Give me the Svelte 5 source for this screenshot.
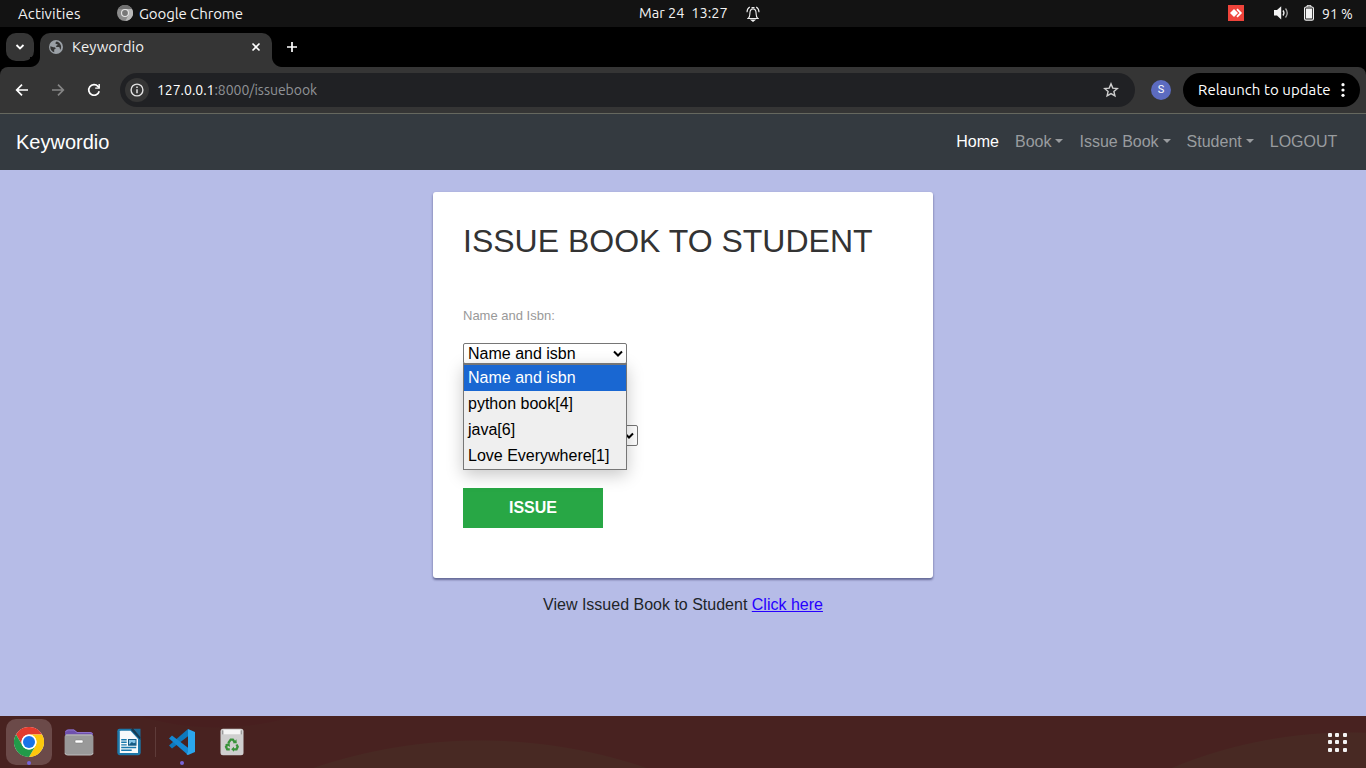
<script>
  const navItems = [
    { label: 'Home', active: true },
    { label: 'Book', menu: true },
    { label: 'Issue Book', menu: true },
    { label: 'Student', menu: true },
    { label: 'LOGOUT' }
  ];
  const options = ['Name and isbn', 'python book[4]', 'java[6]', 'Love Everywhere[1]'];
  const dots = [0, 1, 2, 3, 4, 5, 6, 7, 8];
</script>

<div class="screen">
  <header class="system">
    <div class="sys-left">
      <span class="activities">Activities</span>
      <svg class="mono" width="16" height="16" viewBox="0 0 16 16">
        <circle cx="8" cy="8" r="8" fill="#8c8c8c" />
        <path d="M8 4h7A8 8 0 0 1 8.4 16l3.2-6z" fill="#b9b9b9" />
        <path d="M1 4A8 8 0 0 1 15 4H8z" fill="#707070" />
        <circle cx="8" cy="8" r="4" fill="#e6e6e6" />
        <circle cx="8" cy="8" r="2.9" fill="#777" />
      </svg>
      <span class="appname">Google Chrome</span>
    </div>
    <div class="clock">
      <span class="date">Mar 24&nbsp; 13:27</span>
      <svg width="14" height="16" viewBox="0 0 14 16" fill="none" stroke="#eee" stroke-width="1.1">
        <path d="M1.200 12.500h11.600M2.400 12.300c1.600-1.300 1.400-3.200 1.500-5.100C4 4.300 5 2.900 7 2.900s3 1.400 3.100 4.300c.1 1.900-.1 3.800 1.500 5.100" />
        <path d="M1 6.200c0-2.500 1-4.200 2.800-5.200M13 6.200c0-2.500-1-4.200-2.800-5.200M5.500 1.500h3" />
        <path d="M5.400 14h3.200L7 15.300z" fill="#eee" />
      </svg>
    </div>
    <div class="tray">
      <svg class="anydesk" width="16" height="16" viewBox="0 0 16 16">
        <rect width="16" height="16" fill="#ef443b" />
        <path d="M2 8l4-4 4 4-4 4z" fill="#fff" />
        <path d="M9 4.200L12.800 8 9 11.800" fill="none" stroke="#fff" stroke-width="1.800" />
      </svg>
      <svg class="speaker" width="16" height="14" viewBox="0 0 16 14">
        <path d="M0 4h3L7.200.2v13.200L3 9.600H0z" fill="#f2f2f2" />
        <path d="M9 4.500q2 2.500 0 5" fill="none" stroke="#f2f2f2" stroke-width="1.300" />
        <path d="M11.500 2.500q3.500 4.500 0 9" fill="none" stroke="#aaa" stroke-width="1.300" />
      </svg>
      <svg class="battery" width="10" height="16" viewBox="0 0 10 16">
        <path d="M3 2V.7h4V2" fill="none" stroke="#f2f2f2" />
        <rect x=".6" y="2" width="8.800" height="13.200" rx="1.500" fill="none" stroke="#f2f2f2" stroke-width="1.200" />
        <rect x="2" y="3.500" width="6" height="10" fill="#f2f2f2" />
      </svg>
      <span class="percent">91 %</span>
    </div>
  </header>

  <div class="tabs">
    <div class="tabsearch">
      <svg width="10" height="8" viewBox="0 0 10 8"><path d="M1.500 2L5 5.500 8.500 2" fill="none" stroke="#fff" stroke-width="1.800" /></svg>
    </div>
    <div class="tab">
      <svg width="14" height="14" viewBox="0 0 14 14">
        <circle cx="7" cy="7" r="7" fill="#9aa0a6" />
        <path d="M1.400 6.200L4.500 7.200c1.500 0 2.200.6 2.100 1.500L5.200 9.600v2.700A5.600 5.600 0 0 1 1.400 6.200zM7.600 1.500c-1 .5-1.400 1.500-1 2.300l2.200.6c-.6 1.500-2 .7-1.700 2.100.4 1 2.200 0 3.200.8.900.7.200 2 1 2.500A5.700 5.700 0 0 0 9.200 1.900z" fill="#353535" />
      </svg>
      <span class="tabtitle">Keywordio</span>
      <svg class="close" width="10" height="10" viewBox="0 0 10 10"><path d="M1.500 1.500l7 7M8.500 1.500l-7 7" stroke="#fff" stroke-width="1.600" /></svg>
    </div>
    <svg class="plus" width="12" height="12" viewBox="0 0 12 12"><path d="M6 1v10M1 6h10" stroke="#fff" stroke-width="1.700" /></svg>
  </div>

  <div class="toolbar">
    <svg class="tool" width="14" height="14" viewBox="0 0 14 14"><path d="M13 7H2.200M7 1.700L1.700 7 7 12.300" fill="none" stroke="#fff" stroke-width="1.700" /></svg>
    <svg class="tool" width="14" height="14" viewBox="0 0 14 14"><path d="M1 7h10.800M7 1.700L12.300 7 7 12.300" fill="none" stroke="#858585" stroke-width="1.700" /></svg>
    <svg class="tool" width="14" height="14" viewBox="0 0 14 14"><path d="M12.200 8.200A5.300 5.300 0 1 1 11 3.400l1 1.100" fill="none" stroke="#fff" stroke-width="1.700" /><path d="M12.900 1v4.800H8.200V4.400h3.300V1z" fill="#fff" /></svg>
    <div class="omnibox">
      <span class="info">
        <svg width="14" height="14" viewBox="0 0 14 14"><circle cx="7" cy="7" r="5.900" fill="none" stroke="#e3e3e3" stroke-width="1.400" /><path d="M7 6.200v4M7 3.600v1.500" stroke="#e3e3e3" stroke-width="1.500" /></svg>
      </span>
      <span class="url"><b>127.0.0.1</b>:8000/issuebook</span>
      <svg class="star" width="16" height="16" viewBox="0 0 16 16"><path d="M8 1.900l1.800 4.200 4.500.4-3.400 3 1 4.400L8 11.600l-3.900 2.300 1-4.400-3.400-3 4.500-.4z" fill="none" stroke="#cfcfcf" stroke-width="1.400" /></svg>
    </div>
    <span class="avatar">S</span>
    <div class="relaunch">
      <span>Relaunch to update</span>
      <svg width="4" height="16" viewBox="0 0 4 16" fill="#fff"><circle cx="2" cy="2.700" r="1.600" /><circle cx="2" cy="8" r="1.600" /><circle cx="2" cy="13.300" r="1.600" /></svg>
    </div>
  </div>

  <nav>
    <span class="brand">Keywordio</span>
    <ul>
      {#each navItems as item}
        <li class:active={item.active} class:menu={item.menu}>{item.label}</li>
      {/each}
    </ul>
  </nav>

  <main>
    <section class="card">
      <h2>ISSUE BOOK TO STUDENT</h2>
      <div class="label">Name and Isbn:</div>
      <div class="field">
        <div class="select book">
          <span>Name and isbn</span>
          <svg width="10" height="8" viewBox="0 0 10 8"><path d="M1 1.500l4 4 4-4" fill="none" stroke="#000" stroke-width="2" /></svg>
        </div>
        <div class="options">
          {#each options as option, i}
            <div class="option" class:selected={i === 0}>{option}</div>
          {/each}
        </div>
      </div>
      <div class="select student">
        <svg width="10" height="8" viewBox="0 0 10 8"><path d="M1 1.500l4 4 4-4" fill="none" stroke="#000" stroke-width="2" /></svg>
      </div>
      <div class="issue">ISSUE</div>
    </section>
    <p>View Issued Book to Student <span class="link">Click here</span></p>
  </main>

  <footer>
    <div class="slot current">
      <svg width="30" height="30" viewBox="0 0 30 30">
        <circle cx="15" cy="15" r="15" fill="#fff" />
        <path d="M2 7.500A15 15 0 0 1 28 7.500H15A7.500 7.500 0 0 0 8.500 18.750z" fill="#e33b2e" />
        <path d="M28 7.500A15 15 0 0 1 15 30l6.500-11.250A7.500 7.500 0 0 0 15 7.500z" fill="#fdc80d" />
        <path d="M15 30A15 15 0 0 1 2 7.500l6.500 11.250A7.500 7.500 0 0 0 21.500 18.750z" fill="#229b49" />
        <circle cx="15" cy="15" r="7.500" fill="#fff" /><circle cx="15" cy="15" r="6" fill="#1a73e8" />
      </svg>
      <i></i>
    </div>
    <div class="slot">
      <svg width="30" height="28" viewBox="0 0 30 28">
        <path d="M1 5q0-3.500 3-3.500h6l3 2.500h13q3 0 3 3v6H1z" fill="#6f51ad" />
        <path d="M1.500 4q1-2 3-2h5.500l3 2.500H26q2 0 2.500 1.500" fill="none" stroke="#8e72ca" />
        <rect x=".6" y="6.500" width="28.800" height="20.500" rx="2.500" fill="#999" />
        <path d="M2 7h26M1 25q.5 2 2.500 2h23q2 0 2.500-2" fill="none" stroke="#bdbdbd" />
        <rect x="11" y="12" width="8" height="3" rx="1" fill="#fff" stroke="#777" stroke-width=".5" />
      </svg>
    </div>
    <div class="slot">
      <svg width="26" height="28" viewBox="0 0 26 28">
        <path d="M3.500.8H16l8.700 9v15q0 2.400-2.400 2.400H3.700q-2.400 0-2.400-2.400V3.200Q1.300.8 3.500.8z" fill="#1c78aa" />
        <path d="M4.500 2.800h10L22 11v14H3.800V3.500z" fill="#f7fafb" />
        <path d="M17 .8h7.500v8.400z" fill="#1c6d9a" /><path d="M14.500 1.500L24.500 12V9.500L17 .8z" fill="#143c54" />
        <path d="M5.200 11.700h5.500M5.200 14.300h5.500M5.200 16.900h5.500M5.200 19.500h15M5.200 22.300h10.500" stroke="#1879ad" stroke-width="1.400" />
        <rect x="12.500" y="11.500" width="7.500" height="5.700" fill="#85c5e8" stroke="#145b84" /><path d="M12.800 17l3-3 2 1.300 2-.8V17z" fill="#145b84" />
      </svg>
    </div>
    <span class="rule"></span>
    <div class="slot code">
      <svg width="28" height="28" viewBox="0 0 28 28">
        <path d="M1 17.500L20 1v7.200L4 20.500z" fill="#0d78bd" />
        <path d="M1 10.500L4 7.500 20 19.800V27z" fill="#1488d3" />
        <path d="M20 1l7 3v20l-7 3-1.500-.8L20 24z" fill="#2ba6ed" />
      </svg>
      <i></i>
    </div>
    <div class="slot">
      <svg width="24" height="28" viewBox="0 0 24 28">
        <rect x=".5" y=".8" width="23" height="26.500" rx="2.500" fill="#cfcfcf" />
        <rect x="2" y="1.800" width="20" height="4.500" rx="1.500" fill="#f5f5f5" /><path d="M2.800 2.300v4M21.200 2.300v4" stroke="#777" />
        <g fill="none" stroke="#38933a" stroke-width="2.300">
          <path d="M8.200 15.200l2.500-3.600h2.200l1.700 2.500M16.500 16.500l1.200 2.200-1.200 2.600h-3M9.800 21.300H7.200L6 18.800l1.200-2" />
        </g>
        <path d="M12.800 15.300l4-.1-.4-3.900zM14 18.700v5l-2.800-2.500zM5 16.200l4.500-1.200.6 4z" fill="#38933a" />
      </svg>
    </div>
    <div class="grid">{#each dots as _}<b></b>{/each}</div>
  </footer>
</div>

<style>
  :global(body) { margin: 0; overflow: hidden; }
  .screen { width: 1366px; height: 768px; display: flex; flex-direction: column; overflow: hidden; font-family: "Liberation Sans", Arial, sans-serif; background: #b6bce7; }
  svg { display: block; flex: none; }
  .system, .tabs, .toolbar { font-family: Ubuntu, "Noto Sans", sans-serif; font-size: 15px; color: #f2f2f2; white-space: nowrap; box-sizing: border-box; }
  .system { height: 27px; background: #131313; display: grid; grid-template-columns: 639px 1fr 138px; align-items: center; line-height: 26px; }
  .sys-left { display: flex; align-items: center; padding-left: 18px; }
  .mono, .anydesk, .speaker, .battery { margin-bottom: 1px; }
  .activities { width: 99px; letter-spacing: .1px; }
  .appname { margin-left: 6px; letter-spacing: -.1px; }
  .clock { display: flex; align-items: center; }
  .date { width: 107px; font-size: 14.600px; line-height: 24px; padding-bottom: 2px; }
  .tray { display: flex; align-items: center; }
  .speaker { margin-left: 30px; }
  .battery { margin-left: 14px; }
  .percent { margin-left: 8px; font-size: 14px; }
  .tabs { height: 48px; margin-bottom: -8px; background: #000; display: flex; align-items: flex-start; padding: 6px 6px 0; }
  .tabsearch { width: 28px; height: 28px; border-radius: 10px; background: #353535; display: grid; place-items: center; }
  .tab { position: relative; margin-left: 6px; width: 232px; height: 34px; box-sizing: border-box; padding: 0 11px 6px 9px; border-radius: 10px 10px 0 0; background: #353535; display: flex; align-items: center; }
  .tab::before, .tab::after { content: ""; position: absolute; bottom: 0; width: 10px; height: 10px; }
  .tab::before { left: -10px; background: radial-gradient(circle at 0 0, #000 9.500px, #353535 10.500px); }
  .tab::after { right: -10px; background: radial-gradient(circle at 100% 0, #000 9.500px, #353535 10.500px); }
  .tabtitle { margin-left: 9px; padding-bottom: 2px; }
  .close { margin-left: auto; }
  .plus { margin: 8px 0 0 14px; }
  .toolbar { height: 47px; background: #353535; border-bottom: 1px solid #66685f; border-radius: 8px 8px 0 0; display: flex; align-items: center; padding-left: 15px; position: relative; }
  .tool { margin-right: 22px; }
  .tool:nth-child(3) { margin-right: 19px; }
  .omnibox { width: 1015px; height: 34px; border-radius: 17px; background: #202124; display: flex; align-items: center; box-sizing: border-box; padding: 0 16px 0 5px; }
  .info { width: 24px; height: 24px; border-radius: 50%; background: #353535; display: grid; place-items: center; }
  .url { margin-left: 8px; color: #909397; font-size: 14px; letter-spacing: -.03px; }
  .url b { color: #fff; font-weight: 400; }
  .star { margin-left: auto; }
  .avatar { width: 20px; height: 20px; border-radius: 50%; background: #5c6bc0; margin-left: 16px; text-align: center; font: 11px/20px Roboto, sans-serif; color: #fff; }
  .relaunch { margin-left: 12px; width: 177px; height: 34px; border-radius: 17px; background: #000; box-sizing: border-box; padding: 0 15px; display: flex; align-items: center; justify-content: space-between; color: #fff; letter-spacing: .07px; }
  .relaunch span { padding-bottom: 2px; }
  nav { height: 56px; background: #343a40; display: flex; align-items: center; justify-content: space-between; padding: 0 20.700px 0 16px; box-sizing: border-box; flex: none; }
  .brand { color: #fff; font-size: 20px; }
  ul { display: flex; list-style: none; margin: 0; padding: 0; }
  li { padding: 0 8px; font-size: 16px; line-height: 24px; color: #999c9f; }
  li.active { color: #fff; }
  .menu::after { content: ""; display: inline-block; margin-left: 4px; vertical-align: 4px; border: 4.800px solid transparent; border-top-color: currentColor; border-bottom: 0; }
  main { flex: 1; padding-top: 22px; display: flex; flex-direction: column; align-items: center; }
  .card { width: 500px; height: 386px; background: #fff; border-radius: 3px; box-sizing: border-box; padding: 30px 30px 0; box-shadow: 0 2px 2px rgba(20, 25, 70, .4), 0 1px 3px rgba(20, 25, 70, .2); }
  h2 { margin: 0; font-size: 32px; line-height: 38px; font-weight: 400; color: #333; white-space: nowrap; }
  .label { margin-top: 47px; font-size: 13px; line-height: 18px; color: #999; }
  .field { position: relative; margin-top: 18px; height: 82px; }
  .select { box-sizing: border-box; height: 21px; border: 1px solid #767676; border-radius: 2px; background: #fff; display: flex; align-items: center; justify-content: space-between; font-size: 16px; line-height: 19px; padding: 0 3px 0 4px; color: #000; }
  .book { width: 164px; }
  .student { width: 175px; justify-content: flex-end; }
  .options { position: absolute; top: 20px; left: 0; width: 164px; height: 107px; box-sizing: border-box; border: 1px solid #767676; border-top-width: 2px; background: #efefef; box-shadow: 0 5px 16px rgba(0, 0, 0, .22); }
  .option { padding-left: 4px; height: 26px; line-height: 25px; font-size: 16px; color: #000; }
  .selected { color: #fff; background: #1967d2; }
  .issue { width: 140px; height: 40px; margin-top: 42px; background: #28a745; color: #fff; font-weight: 700; font-size: 16px; line-height: 39px; text-align: center; }
  p { margin: 15px 0 0; font-size: 16px; line-height: 24px; color: #212529; }
  .link { color: #2600ff; text-decoration: underline; }
  footer { height: 52px; flex: none; background: radial-gradient(circle at 1350px 482px, #482923 465px, transparent 466px), radial-gradient(circle at 480px 543px, #482923 518px, transparent 519px), radial-gradient(circle at 217px -258px, #481f1f 269px, transparent 270px), #482220; display: flex; align-items: center; padding-left: 6px; box-sizing: border-box; }
  .slot { position: relative; width: 46px; height: 46px; display: grid; place-items: center; margin-right: 4px; }
  .current { background: #6b4a49; border-radius: 10px; }
  .slot i { position: absolute; bottom: 0; left: 21px; width: 4px; height: 4px; border-radius: 50%; background: #7764d8; }
  .rule { width: 1px; height: 30px; background: #5e3b39; margin: 0 3px 0 -1px; }
  .grid { margin: 0 19.500px 0 auto; display: grid; grid-template-columns: repeat(3, 4px); gap: 3.500px; }
  .grid b { width: 4px; height: 4px; border-radius: 1px; background: #f3f3f3; }
</style>
